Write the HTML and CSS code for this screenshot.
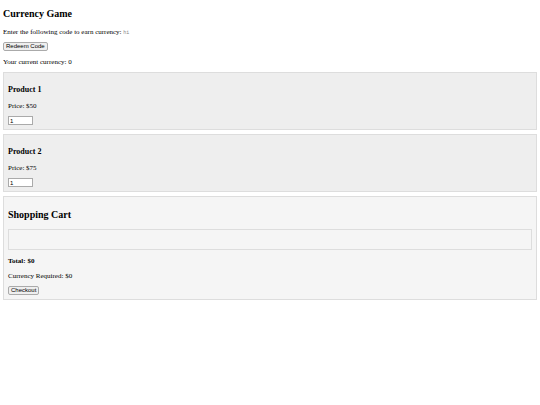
FILE: index.html
```
<!DOCTYPE html>
<html lang="en">
<head>
    <meta charset="UTF-8">
    <meta name="viewport" content="width=device-width, initial-scale=1.0">
    <title>Currency Game</title>
    <link rel="stylesheet" href="styles.css">
</head>
<body>
    <div class="game">
        <h2 class="title">Currency Game</h2>
        <p>Enter the following code to earn currency: <span class="code">hi</span></p>
        <button type="button">Redeem Code</button>
        <p>Your current currency: <span id="currency">0</span></p>
    </div>

    <div class="product">
        <h3>Product 1</h3>
        <p>Price: $50</p>
        <input type="text" value="1" aria-label="Product 1 quantity">
    </div>
    <div class="product">
        <h3>Product 2</h3>
        <p>Price: $75</p>
        <input type="text" value="1" aria-label="Product 2 quantity">
    </div>

    <div class="cart">
        <h2>Shopping Cart</h2>
        <div class="cart-items"></div>
        <p class="total">Total: $<span id="total">0</span></p>
        <p>Currency Required: $<span id="required">0</span></p>
        <button type="button">Checkout</button>
    </div>
</body>
</html>
```
FILE: styles.css
```
*{
    box-sizing: border-box;
}

body{
    margin: 8px 3px;
    font-family: "Liberation Serif", "Times New Roman", serif;
    font-size: 7px;
    line-height: 8px;
    color: black;
    background-color: white;
}

h2{
    margin: 8px 0;
    font-size: 10px;
    line-height: 12px;
}

.title{
    margin-top: 0;
}

h3{
    margin: 8px 0;
    font-size: 8px;
    line-height: 9px;
}

p{
    margin: 7px 0 6px;
}

button, input{
    display: block;
    height: 9px;
    font-family: "Liberation Sans", Arial, sans-serif;
    font-size: 6px;
    line-height: 7px;
    border: 1px solid #aaa;
}

button{
    padding: 0 2px;
    border-radius: 2px;
    background-color: #efefef;
}

input{
    width: 25px;
    padding: 0 1px;
    background-color: white;
}

.code{
    font-family: "Liberation Mono", "Courier New", monospace;
    font-size: 5px;
    line-height: 5px;
    color: #888;
}

.product, .cart{
    margin: 4px 0;
    padding: 4px;
    border: 1px solid #ddd;
    display: flow-root;
}

.product{
    background-color: #eee;
}

.cart{
    background-color: #f5f5f5;
}

.cart-items{
    height: 21px;
    border: 1px solid #ddd;
}

.total{
    font-weight: bold;
}
```
